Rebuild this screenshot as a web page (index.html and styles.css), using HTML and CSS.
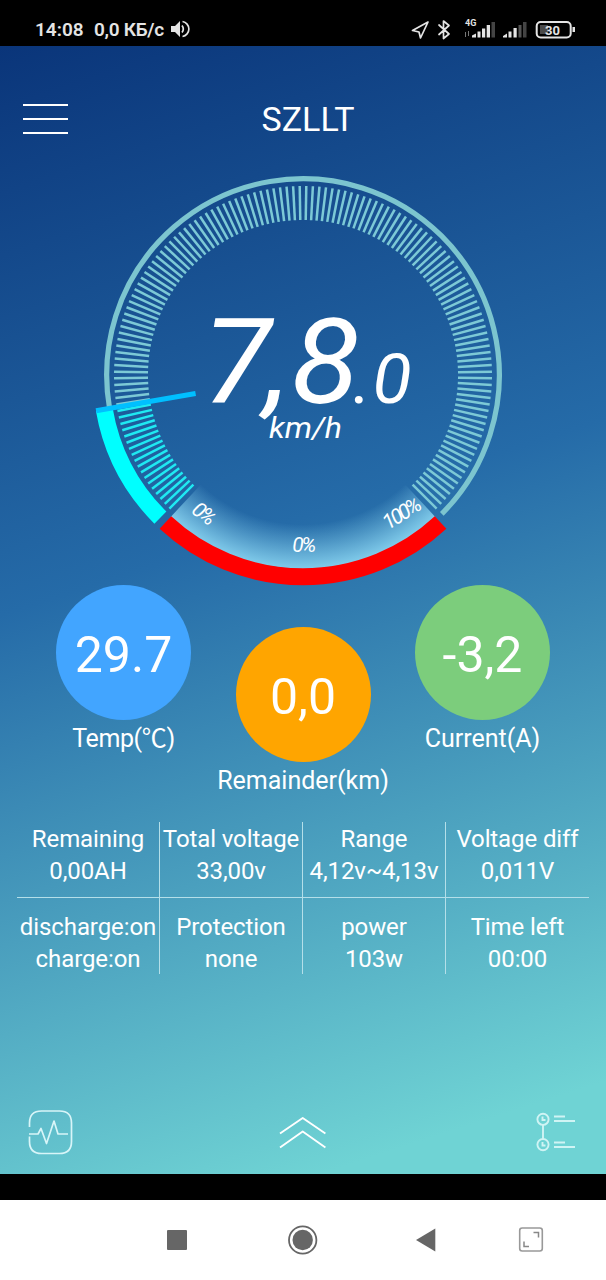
FILE: index.html
```html
<!DOCTYPE html>
<html lang="en">
<head>
<meta charset="utf-8">
<title>SZLLT</title>
<link rel="stylesheet" href="styles.css">
<script src="gauge.js" defer></script>
</head>

<body>
<div class="status">
	<span class="clock">14:08</span>
	<span class="speed">0,0 КБ/с</span>
	<svg class="volume" width="18" height="18" viewBox="0 0 18 18">
		<path d="M0 6h4l5-5v16l-5-5H0z" fill="#e4e4e4"/>
		<path d="M11 5.500q2.600 3.500 0 7M11.500 1.500a7.600 7.600 0 0 1 0 15" fill="none" stroke="#e4e4e4" stroke-width="1.700"/>
	</svg>
	<svg class="signals" width="168" height="24" viewBox="410 17 168 24">
		<g fill="none" stroke="#e4e4e4" stroke-width="1.700" stroke-linejoin="round" stroke-linecap="round">
			<path d="M428 22l-15.500 8.500 6.500 1.500 1.500 6z"/>
			<path d="M439 25l10 9-5.500 4.500V21l5.500 4.500-10 9"/>
		</g>
		<text class="net" x="465" y="26">4G</text>
		<g fill="#777">
			<path d="M465 32h1v5h-1zM468 31h1v5h-1z"/>
			<path d="M491.500 22h3.500v15.500h-3.500zM523 22h3.500v15.500H523z" fill="#444"/>
		</g>
		<g fill="#e4e4e4">
			<path d="M472 35.500l4-2v4h-4zM477.500 31.500h3v6h-3zM482 28.500h3.200v9H482zM486.700 25h3.300v12.500h-3.300z"/>
			<path d="M503 36l4-2.500v4h-4zM508.500 31.500h3v6h-3zM513.500 28h3.200v9.500h-3.200z"/>
			<path d="M518.500 25h3v12.500h-3z" fill="#555"/>
			<path d="M572.500 27h2.500v5h-2.500z"/>
		</g>
		<rect x="536.700" y="22" width="34" height="15.500" rx="4" fill="none" stroke="#e4e4e4" stroke-width="2"/>
		<rect x="540" y="25" width="8" height="9" fill="#4a4a4a"/>
		<text class="battery" x="552.500" y="34.500">30</text>
	</svg>
</div>

<div class="app">
	<div class="header">
		<div class="menu"><i></i><i></i><i></i></div>
		<h1>SZLLT</h1>
	</div>

	<svg class="gauge" width="420" height="420" viewBox="93 168 420 420">
		<defs>
			<radialGradient id="glow" gradientUnits="userSpaceOnUse" cx="303" cy="375" r="194">
				<stop offset="0.770" stop-color="#85d0ee" stop-opacity="0"/>
				<stop offset="0.870" stop-color="#85d0ee" stop-opacity="0.400"/>
				<stop offset="1" stop-color="#85d0ee" stop-opacity="0.950"/>
			</radialGradient>
		</defs>
		<path id="sector" fill="url(#glow)"/>
		<path id="ring" class="ring"/>
		<g id="ticks"></g>
		<path id="done" class="done"/>
		<path id="charge" class="charge"/>
		<line id="needle" class="needle"/>
		<text class="big" transform="translate(202.500 402.500) scale(1.060 1)" dx="0 -5.500 1.500">7,8</text>
		<text class="small" x="353" y="402.500" dx="0 1" textLength="58.500" lengthAdjust="spacingAndGlyphs">.0</text>
		<text class="unit" x="269" y="438" textLength="73" lengthAdjust="spacingAndGlyphs">km/h</text>
		<text class="pct" transform="translate(203 513) rotate(37)" y="7">0%</text>
		<text class="pct" x="303" y="552">0%</text>
		<text class="pct" transform="translate(401 514) rotate(-32)" y="7">100%</text>
	</svg>

	<div class="circles">
		<div class="item"><div class="circle blue">29.7</div><p class="temp">Temp(℃)</p></div>
		<div class="item low"><div class="circle orange">0,0</div><p>Remainder(km)</p></div>
		<div class="item"><div class="circle green">-3,2</div><p>Current(A)</p></div>
	</div>

	<div class="info">
		<div class="cell">Remaining<br>0,00AH</div>
		<div class="cell">Total voltage<br>33,00v</div>
		<div class="cell">Range<br>4,12v~4,13v</div>
		<div class="cell">Voltage diff<br>0,011V</div>
		<div class="cell">discharge:on<br>charge:on</div>
		<div class="cell">Protection<br>none</div>
		<div class="cell">power<br>103w</div>
		<div class="cell">Time left<br>00:00</div>
	</div>

	<div class="tools">
		<svg width="46" height="46" viewBox="28 1109 46 46" fill="none" stroke="#d8f5f8" stroke-width="1.700">
			<path d="M29.500 1127v-4q0-12 12-12h18q12 0 12 12v18.500q0 12-12 12h-18q-12 0-12-12v-5"/>
			<path d="M29 1134h9l3-5.500 5.500 15 7.500-22.500 4 13h10" stroke-linejoin="round"/>
		</svg>
		<svg width="48" height="34" viewBox="281 1115 48 34" fill="none" stroke="#fff" stroke-width="1.900">
			<path d="M280 1133.500l22.700-15.500 22.700 15.500M280 1147.500l22.700-16 22.700 16" stroke-linejoin="round"/>
		</svg>
		<svg width="40" height="42" viewBox="536 1111 40 42" fill="none" stroke="#d0f4f4" stroke-width="1.900">
			<circle cx="543" cy="1119.300" r="5.600"/>
			<circle cx="543" cy="1144.600" r="5.600"/>
			<path d="M543 1125v14M542.500 1116.500v3.500h3M542.500 1142v3.500h3M554 1116.500h11M554 1121h21M554 1142.500h11M554 1147h21"/>
		</svg>
	</div>
</div>

<div class="nav">
	<svg width="606" height="80" viewBox="0 1200 606 80">
		<rect x="167" y="1230" width="20" height="20" rx="1" fill="#666"/>
		<circle cx="302.700" cy="1240" r="13.700" fill="none" stroke="#666" stroke-width="1.800"/>
		<circle cx="302.700" cy="1240" r="10.200" fill="#666"/>
		<path d="M416 1240l19.300-11.500v23z" fill="#666"/>
		<rect x="519.700" y="1228" width="22.600" height="23" rx="2.500" fill="none" stroke="#999" stroke-width="1.600"/>
		<path d="M533.500 1232.500h5v5M524 1241.500v5h5" fill="none" stroke="#888" stroke-width="1.500"/>
	</svg>
</div>
</body>
</html>
```
FILE: styles.css
```css
*{
	margin:0;
	padding:0;
	box-sizing:border-box;
	}
body{
	width:606px;
	height:1280px;
	overflow:hidden;
	background:#000;
	color:#fff;
	font-family:Roboto,"Noto Sans CJK SC",sans-serif;
	}
svg{
	display:block;
	flex:none;
	overflow:visible;
	}

/* status bar */
.status{
	display:flex;
	align-items:center;
	height:46px;
	padding:13px 28px 0 35px;
	color:#e4e4e4;
	font-size:19px;
	font-weight:600;
	line-height:24px;
	white-space:nowrap;
	}
.clock{
	width:59px;
	}
.speed{
	width:77px;
	letter-spacing:-0.3px;
	}
.volume{
	margin-bottom:2px;
	}
.signals{
	margin-left:auto;
	margin-bottom:2px;
	}
.net{
	font-size:9px;
	font-weight:700;
	fill:#e4e4e4;
	}
.battery{
	font-size:13px;
	font-weight:700;
	fill:#e4e4e4;
	text-anchor:middle;
	}

/* main screen */
.app{
	height:1128px;
	padding-top:46px;
	background:linear-gradient(162deg,#0a357a 0%,#256ba8 43%,#6fd3d4 93%,#6fd3d4 100%);
	}
.header{
	display:grid;
	grid-template-columns:45px 1fr 45px;
	align-items:center;
	height:54px;
	padding:0 23px;
	}
.menu{
	display:flex;
	flex-direction:column;
	gap:12px;
	padding-bottom:1px;
	}
.menu i{
	height:2px;
	background:#fff;
	}
.header h1{
	padding-left:10px;
	font-size:34px;
	font-weight:400;
	line-height:54px;
	text-align:center;
	}

.gauge{
	margin:22px auto 0;
	}
.ring{
	fill:none;
	stroke:#7cc5cf;
	stroke-width:5.200;
	}
.tick{
	stroke:#7cc9d6;
	stroke-width:2.500;
	}
.tick.on{
	stroke:#1fe9f2;
	}
.done{
	fill:none;
	stroke:#0ff;
	stroke-width:17;
	}
.charge{
	fill:none;
	stroke:#f00;
	stroke-width:17;
	}
.needle{
	stroke:#00bfff;
	stroke-width:5;
	}
.gauge text{
	fill:#fff;
	font-style:italic;
	}
.big{
	font-size:119px;
	}
.small{
	font-size:68px;
	}
.unit{
	font-size:30px;
	}
.pct{
	font-size:21px;
	letter-spacing:-2.500px;
	text-anchor:middle;
	}

.circles{
	display:flex;
	justify-content:center;
	gap:44.500px;
	height:240px;
	margin-top:-3px;
	}
.item{
	width:135px;
	display:flex;
	flex-direction:column;
	align-items:center;
	font-size:25px;
	line-height:38px;
	white-space:nowrap;
	}
.low{
	margin-top:42px;
	}
.temp{
	letter-spacing:-0.4px;
	}
.circle{
	width:135px;
	height:135px;
	border-radius:50%;
	font-size:50px;
	line-height:140px;
	text-align:center;
	}
.blue{background:#42a5ff;}
.orange{background:#ffa500;}
.green{background:#7ccd7c;}

/* battery table */
.info{
	display:grid;
	grid-template-columns:repeat(4,143px);
	grid-template-rows:76px 76px;
	justify-content:center;
	margin-top:-3px;
	}
.cell{
	padding-top:1px;
	border-right:1px solid #b4dfe9;
	font-size:24px;
	letter-spacing:-0.1px;
	line-height:32px;
	text-align:center;
	white-space:nowrap;
	}
.cell:nth-child(4n){
	border-right:0;
	}
.cell:nth-child(-n+4){
	border-bottom:1px solid #b4dfe9;
	}
.cell:nth-child(n+5){
	padding-top:13px;
	}

.tools{
	display:flex;
	justify-content:space-between;
	align-items:center;
	margin-top:135px;
	padding:0 30px 0 28px;
	}

.nav{
	margin-top:26px;
	height:80px;
	background:#fff;
	}
```
FILE: gauge.js
```js
var cx=303,cy=375;
//角度从右侧开始，顺时针
function point(r,deg){
	var a=deg*Math.PI/180;
	return (cx+r*Math.cos(a)).toFixed(2)+' '+(cy+r*Math.sin(a)).toFixed(2);
}
function arc(r,from,to){
	return 'M'+point(r,from)+'A'+r+' '+r+' 0 '+(to-from>180?1:0)+' 1 '+point(r,to);
}
function line(el,r1,r2,deg){
	var a=point(r1,deg).split(' ');
	var b=point(r2,deg).split(' ');
	el.setAttribute('x1',a[0]);
	el.setAttribute('y1',a[1]);
	el.setAttribute('x2',b[0]);
	el.setAttribute('y2',b[1]);
}
function get(id){
	return document.getElementById(id);
}

var now=170.2;
get('ring').setAttribute('d',arc(196.3,now,405));
get('done').setAttribute('d',arc(201.7,135,now));
get('charge').setAttribute('d',arc(201.7,47,133));
get('sector').setAttribute('d',arc(194,47,133)+'L'+cx+' '+cy+'Z');
line(get('needle'),109,210,now);

for(var d=135;d<=405;d+=2){
	var t=document.createElementNS('http://www.w3.org/2000/svg','line');
	t.setAttribute('class',d<now?'tick on':'tick');
	line(t,155,189,d);
	get('ticks').appendChild(t);
}
```
